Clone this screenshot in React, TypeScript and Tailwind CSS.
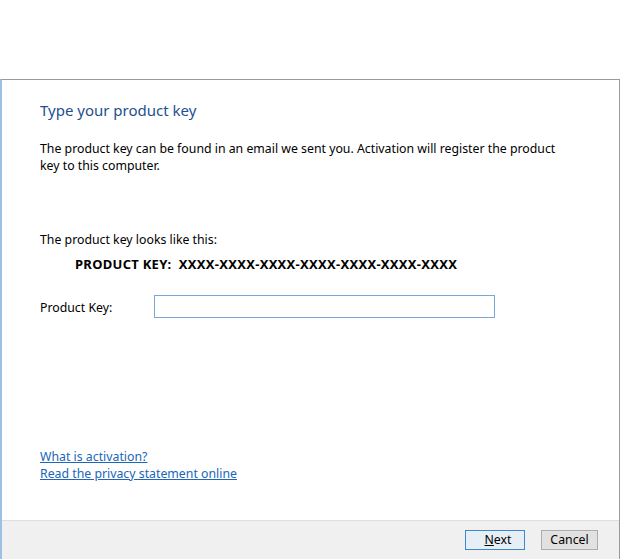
export default function App() {
  return (
    <div className="w-[633px] h-[559px] bg-white overflow-hidden font-['Noto_Sans',sans-serif] text-[12.3px] text-black">
      <div className="h-[79px]" />
      <div className="w-[620px] h-[480px] flex flex-col border-t border-r border-[#9a9a9a] border-l-2 border-l-[#9cc0e6]">
        <div className="flex-1 flex flex-col pl-[38px] pr-6">
          <h1 className="mt-[20px] text-[15px] leading-[20px] text-[#1e4f91]">Type your product key</h1>
          <p className="mt-[20px] leading-[17px] w-[528px]">
            The product key can be found in an email we sent you. Activation will register the product key to this computer.
          </p>
          <p className="mt-[57px] leading-[17px]">The product key looks like this:</p>
          <p className="mt-[8px] ml-[35px] font-bold text-[13px] tracking-[0.28px] leading-[17px]">
            PRODUCT KEY:&nbsp;&nbsp;XXXX-XXXX-XXXX-XXXX-XXXX-XXXX-XXXX
          </p>
          <div className="mt-[22px] flex items-center">
            <span className="w-[114px] pt-[3px]">Product Key:</span>
            <input className="w-[341px] h-[23px] border border-[#7aa7d6] outline-none" />
          </div>
          <div className="mt-auto mb-[38px] flex flex-col leading-[17px] text-[#2066b8]">
            <a className="underline w-fit" href="#">What is activation?</a>
            <a className="underline w-fit" href="#">Read the privacy statement online</a>
          </div>
        </div>
        <div className="h-[39px] bg-[#f0f0f0] border-t border-[#dfdfdf] flex justify-end items-start gap-[16px] pr-[21px] pt-[9px]">
          <button className="w-[60px] h-[20px] pl-[6px] border border-[#3f88c8] bg-[#e6eef6] leading-none">
            <span className="underline">N</span>ext
          </button>
          <button className="w-[57px] h-[20px] border border-[#adadad] bg-[#e1e1e1] leading-none">Cancel</button>
        </div>
      </div>
    </div>
  );
}
